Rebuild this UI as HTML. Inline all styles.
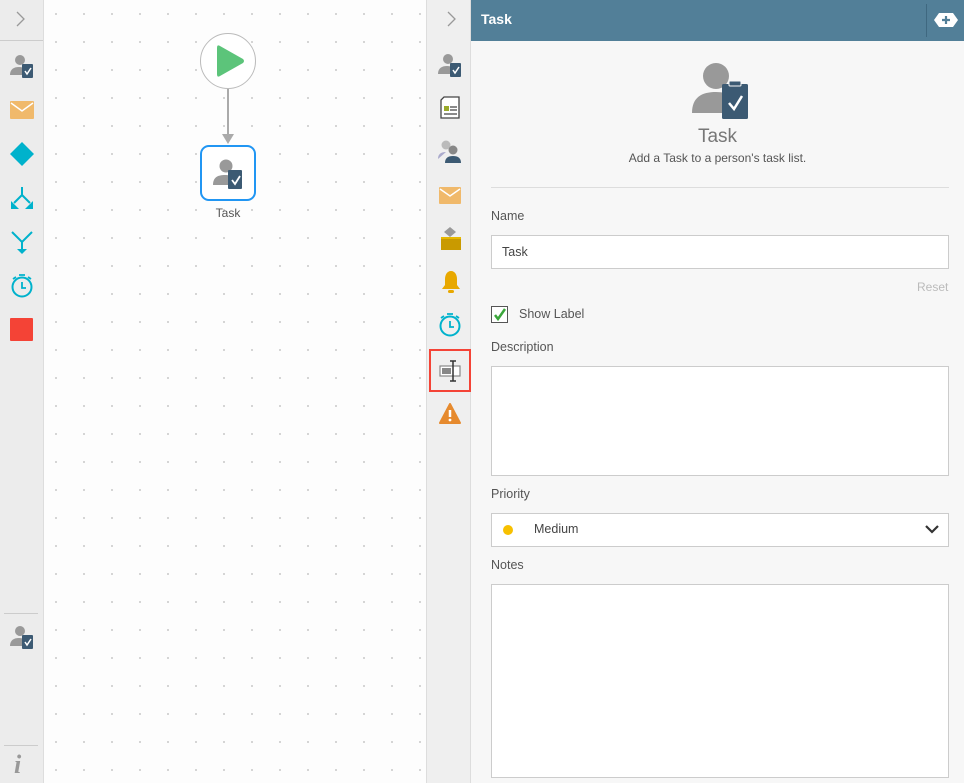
<!DOCTYPE html>
<html><head><style>
*{box-sizing:border-box;margin:0;padding:0}
body{width:964px;height:783px;overflow:hidden;font-family:"Liberation Sans",sans-serif;background:#fff;position:relative}
.abs{position:absolute}
#left{left:0;top:0;width:44px;height:783px;background:#ececec;border-right:1px solid #ddd}
#canvas{left:44px;top:0;width:382px;height:783px;background-color:#fdfdfd;background-image:radial-gradient(circle,#c8c8c8 0.8px,transparent 1px);background-size:28px 28px;background-position:-2px 0px}
#strip{left:426px;top:0;width:45px;height:783px;background:#efefef;border-left:1px solid #ddd;border-right:1px solid #ddd}
#hdr{left:471px;top:0;width:493px;height:41px;background:#527f98;color:#fff;font-size:14px;font-weight:bold;padding:11px 10px}
#panel{left:471px;top:41px;width:493px;height:742px;background:#f7f7f7}
.lbl{font-size:12.5px;color:#555;position:absolute;left:20px}
.box{position:absolute;left:20px;width:458px;background:#fff;border:1px solid #ccc}
</style></head><body>
<div id="left" class="abs">
 <svg class="abs" style="left:15px;top:11px" width="12" height="16"><path d="M2 1l7 7-7 7" stroke="#999" fill="none" stroke-width="1.3"/></svg>
 <div class="abs" style="left:0;top:40px;width:43px;height:1px;background:#ccc"></div>
 <svg class="abs" style="left:10px;top:53px" width="24" height="26"><circle cx="10" cy="7" r="5" fill="#999"/><path d="M0 22c0-6 4-8 9-8s6 2 6 4v4z" fill="#999"/><rect x="12" y="11" width="11" height="14" rx="1" fill="#3c5a73"/><path d="M15 18l2 3 4-6" stroke="#fff" fill="none" stroke-width="1.5"/></svg>
 <svg class="abs" style="left:10px;top:101px" width="24" height="18"><rect width="24" height="18" rx="1" fill="#f0b96b"/><path d="M1 2l11 8 11-8" stroke="#fff" fill="none" stroke-width="1.5"/></svg>
 <svg class="abs" style="left:10px;top:142px" width="24" height="24"><path d="M12 0l12 12-12 12L0 12z" fill="#00b2cc"/></svg>
 <svg class="abs" style="left:10px;top:187px" width="24" height="23"><path d="M12 0v8M12 8l-8 8M12 8l8 8" stroke="#00b2cc" stroke-width="2" fill="none"/><path d="M1 14v8h8zM23 14v8h-8z" fill="#00b2cc"/></svg>
 <svg class="abs" style="left:10px;top:231px" width="24" height="24"><path d="M2 1l10 10 10-10M12 11v8" stroke="#00b2cc" stroke-width="2" fill="none"/><path d="M7 18h10l-5 5z" fill="#00b2cc"/></svg>
 <svg class="abs" style="left:10px;top:274px" width="24" height="24"><circle cx="12" cy="13" r="9.5" stroke="#00b2cc" stroke-width="2" fill="none"/><path d="M12 8v6h4M9 1h6M3 5l3-2M21 5l-3-2" stroke="#00b2cc" stroke-width="1.8" fill="none"/></svg>
 <div class="abs" style="left:10px;top:318px;width:23px;height:23px;background:#f44336;border-radius:1px"></div>
 <div class="abs" style="left:4px;top:613px;width:34px;height:1px;background:#ccc"></div>
 <svg class="abs" style="left:10px;top:624px" width="24" height="26"><circle cx="10" cy="7" r="5" fill="#999"/><path d="M0 22c0-6 4-8 9-8s6 2 6 4v4z" fill="#999"/><rect x="12" y="11" width="11" height="14" rx="1" fill="#3c5a73"/><path d="M15 18l2 3 4-6" stroke="#fff" fill="none" stroke-width="1.5"/></svg>
 <div class="abs" style="left:4px;top:745px;width:34px;height:1px;background:#ccc"></div>
 <div class="abs" style="left:14px;top:750px;font-family:'Liberation Serif',serif;font-style:italic;font-weight:bold;font-size:26px;color:#999">i</div>
</div>
<div id="canvas" class="abs">
 <div class="abs" style="left:156px;top:33px;width:56px;height:56px;border-radius:50%;border:1px solid #bbb;background:#fff"></div>
 <svg class="abs" style="left:173px;top:44px" width="28" height="34"><path d="M3 2Q0 0 0 4v26q0 4 3 2l23-13q2-2 0-4z" fill="#5cc47a"/></svg>
 <div class="abs" style="left:183px;top:89px;width:2px;height:48px;background:#aaa"></div>
 <svg class="abs" style="left:178px;top:134px" width="12" height="10"><path d="M0 0h12l-6 10z" fill="#aaa"/></svg>
 <div class="abs" style="left:156px;top:145px;width:56px;height:56px;border-radius:9px;border:2px solid #2196f3;background:#fff"></div>
 <svg class="abs" style="left:169px;top:157px" width="30" height="33"><circle cx="13" cy="9" r="6.5" fill="#999"/><path d="M0 28c0-8 5-10 12-10s7 3 7 5v5z" fill="#999"/><rect x="15" y="13" width="14" height="19" rx="1" fill="#3c5a73"/><path d="M19 23l3 4 5-8" stroke="#fff" fill="none" stroke-width="1.8"/></svg>
 <div class="abs" style="left:160px;top:206px;width:48px;text-align:center;font-size:12px;color:#555">Task</div>
</div>
<div id="strip" class="abs">
 <svg class="abs" style="left:19px;top:11px" width="12" height="16"><path d="M2 1l7 7-7 7" stroke="#999" fill="none" stroke-width="1.3"/></svg>
 <svg class="abs" style="left:11px;top:52px" width="24" height="26"><circle cx="10" cy="7" r="5" fill="#999"/><path d="M0 22c0-6 4-8 9-8s6 2 6 4v4z" fill="#999"/><rect x="12" y="11" width="11" height="14" rx="1" fill="#3c5a73"/><path d="M15 18l2 3 4-6" stroke="#fff" fill="none" stroke-width="1.5"/></svg>
 <svg class="abs" style="left:13px;top:96px" width="20" height="23"><path d="M4 1h15v21H1V4z" stroke="#444" fill="#fff" stroke-width="1.3"/><rect x="4" y="10" width="5" height="5" fill="#9aaa2a"/><path d="M10 11h7M10 14h7M4 18h13" stroke="#444" stroke-width="1.3"/></svg>
 <svg class="abs" style="left:11px;top:139px" width="24" height="24"><circle cx="8" cy="6" r="4.5" fill="#bbb"/><path d="M0 20c0-5 3-7 8-7" fill="#aac" stroke="none"/><circle cx="15" cy="11" r="4.5" fill="#888"/><path d="M7 24c0-5 3-7 8-7s8 2 8 7z" fill="#3c5a73"/></svg>
 <svg class="abs" style="left:12px;top:187px" width="22" height="17"><rect width="22" height="17" rx="1" fill="#f0b96b"/><path d="M1 2l10 7 10-7" stroke="#fff" fill="none" stroke-width="1.5"/></svg>
 <svg class="abs" style="left:13px;top:227px" width="22" height="24"><path d="M10 0l6 5-6 5-6-5z" fill="#999"/><rect x="1" y="10" width="20" height="13" fill="#c99a00"/><rect x="1" y="10" width="20" height="2" fill="#e6b800"/></svg>
 <svg class="abs" style="left:14px;top:270px" width="20" height="24"><path d="M10 1c-4 0-6 4-6 8v6l-3 4h18l-3-4V9c0-4-2-8-6-8z" fill="#e8a800"/><rect x="7" y="20" width="6" height="3" rx="1.5" fill="#e8a800"/></svg>
 <svg class="abs" style="left:11px;top:313px" width="24" height="24"><circle cx="12" cy="13" r="9.5" stroke="#00b2cc" stroke-width="2" fill="none"/><path d="M12 8v6h4M9 1h6M3 5l3-2M21 5l-3-2" stroke="#00b2cc" stroke-width="1.8" fill="none"/></svg>
 <div class="abs" style="left:2px;top:349px;width:42px;height:43px;border:2px solid #f44336"></div>
 <svg class="abs" style="left:12px;top:360px" width="22" height="22"><rect x="1" y="6" width="20" height="10" stroke="#888" fill="#fff" stroke-width="1.2"/><rect x="3" y="8" width="9" height="6" fill="#888"/><path d="M14 1v20M11 1h6M11 21h6" stroke="#333" stroke-width="1.5"/></svg>
 <svg class="abs" style="left:12px;top:403px" width="22" height="21"><path d="M11 1L1 20h20z" fill="#e68a2e" stroke="#e68a2e" stroke-linejoin="round" stroke-width="2"/><path d="M11 7v7" stroke="#fff" stroke-width="2.5"/><circle cx="11" cy="17" r="1.4" fill="#fff"/></svg>
</div>
<div id="hdr" class="abs">Task
 <div class="abs" style="left:455px;top:4px;width:1px;height:33px;background:#3f6880"></div>
 <svg class="abs" style="left:463px;top:13px" width="24" height="14"><path d="M5 0h14l5 7-5 7H5L0 7z" fill="#fff"/><path d="M12 3v8M8 7h8" stroke="#527f98" stroke-width="2.2"/></svg>
</div>
<div id="panel" class="abs">
 <svg class="abs" style="left:220px;top:18px" width="58" height="62"><circle cx="25" cy="17" r="13" fill="#999"/><path d="M1 54c0-16 10-21 24-21s18 6 18 10v11z" fill="#999"/><rect x="31" y="25" width="26" height="35" rx="1.5" fill="#3c5a73"/><rect x="38" y="22" width="12" height="5" rx="1" fill="#3c5a73" stroke="#f7f7f7" stroke-width="1"/><path d="M38 44l5 6 8-13" stroke="#fff" fill="none" stroke-width="2.5"/></svg>
 <div class="abs" style="left:0;width:493px;top:85px;text-align:center;font-size:19px;color:#777">Task</div>
 <div class="abs" style="left:0;width:493px;top:110px;text-align:center;font-size:12px;color:#555">Add a Task to a person's task list.</div>
 <div class="abs" style="left:20px;top:146px;width:458px;height:1px;background:#ddd"></div>
 <div class="lbl" style="top:168px">Name</div>
 <div class="box" style="top:194px;height:34px;font-size:12.5px;color:#444;padding:9px 10px">Task</div>
 <div class="abs" style="left:446px;top:239px;font-size:12px;color:#bbb">Reset</div>
 <div class="abs" style="left:20px;top:265px;width:17px;height:17px;border:1.5px solid #555;background:#fff"></div>
 <svg class="abs" style="left:22px;top:267px" width="14" height="13"><path d="M2 7l3 4 7-10" stroke="#3aa63a" stroke-width="2.5" fill="none"/></svg>
 <div class="abs" style="left:48px;top:266px;font-size:12.5px;color:#555">Show Label</div>
 <div class="lbl" style="top:299px">Description</div>
 <div class="box" style="top:325px;height:110px"></div>
 <div class="lbl" style="top:446px">Priority</div>
 <div class="box" style="top:472px;height:34px"></div>
 <div class="abs" style="left:32px;top:484px;width:10px;height:10px;border-radius:50%;background:#f7c000"></div>
 <div class="abs" style="left:63px;top:481px;font-size:12.5px;color:#444">Medium</div>
 <svg class="abs" style="left:454px;top:483px" width="14" height="10"><path d="M1 2l6 6 6-6" stroke="#333" stroke-width="2.2" fill="none"/></svg>
 <div class="lbl" style="top:517px">Notes</div>
 <div class="box" style="top:543px;height:194px"></div>
</div>
</body></html>
